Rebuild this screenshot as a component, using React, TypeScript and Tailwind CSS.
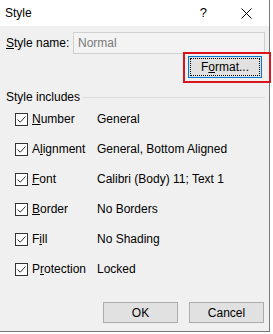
import { useState } from "react";

const rows = [
  { pre: "", key: "N", post: "umber", value: "General" },
  { pre: "A", key: "l", post: "ignment", value: "General, Bottom Aligned" },
  { pre: "", key: "F", post: "ont", value: "Calibri (Body) 11; Text 1" },
  { pre: "", key: "B", post: "order", value: "No Borders" },
  { pre: "F", key: "i", post: "ll", value: "No Shading" },
  { pre: "P", key: "r", post: "otection", value: "Locked" },
];

function Check({ on }: { on: boolean }) {
  return (
    <span className="w-[13px] h-[13px] border border-[#333] bg-white flex items-center justify-center shrink-0">
      {on && (
        <svg width="11" height="11" viewBox="0 0 11 11">
          <path d="M1.5 5.5 L4.2 8.2 L9.5 2.5" fill="none" stroke="#333" strokeWidth="1" />
        </svg>
      )}
    </span>
  );
}

export default function App() {
  const [checked, setChecked] = useState(rows.map(() => true));

  return (
    <div
      className="relative w-[273px] h-[334px] bg-white overflow-hidden text-[12px] text-[#000]"
      style={{ fontFamily: '"Liberation Sans", Arial, sans-serif' }}
    >
      <div className="w-[270px] h-[332px] bg-[#f0f0f0] border-r border-b border-[#777] flex flex-col">
        {/* title bar */}
        <div className="h-[26px] bg-white flex items-center pl-[5px] shrink-0">
          <span className="text-[12px]">Style</span>
          <span className="ml-auto mr-[34px] text-[13px]">?</span>
          <svg width="11" height="11" viewBox="0 0 11 11" className="mr-[17px]">
            <path d="M0.5 0.5 L10.5 10.5 M10.5 0.5 L0.5 10.5" stroke="#000" strokeWidth="1" />
          </svg>
        </div>

        {/* style name */}
        <div className="mt-[6px] h-[22px] flex items-center pl-[6px]">
          <span className="w-[67px]">
            <span className="underline">S</span>tyle name:
          </span>
          <div className="w-[192px] h-[22px] border border-[#d0d0d0] bg-[#f3f3f3] flex items-center pl-[4px] text-[#7a7a7a]">
            Normal
          </div>
        </div>

        {/* format button */}
        <div className="mt-[2px] h-[22px] flex justify-end pr-[7px]">
          <button
            type="button"
            className="w-[74px] h-[22px] border border-[#0078d7] bg-[#e1e1e1] p-[1px]"
          >
            <span className="w-full h-full border border-dotted border-[#000] flex items-center justify-center">
              F<span className="underline">o</span>rmat...
            </span>
          </button>
        </div>

        {/* style includes */}
        <div className="mt-[12px] h-[14px] flex items-center pl-[6px]">
          <span>Style includes</span>
          <span className="flex-1 h-px bg-[#dcdcdc] ml-[3px] mr-[4px]" />
        </div>

        <div className="flex flex-col">
          {rows.map((r, i) => (
            <div
              key={r.value}
              className="h-[30px] flex items-center pl-[15px] cursor-default"
              onClick={() => setChecked(checked.map((c, j) => (j === i ? !c : c)))}
            >
              <Check on={checked[i]} />
              <span className="w-[69px] pl-[4px]">
                {r.pre}
                <span className="underline">{r.key}</span>
                {r.post}
              </span>
              <span>{r.value}</span>
            </div>
          ))}
        </div>

        {/* buttons */}
        <div className="mt-auto mb-[8px] flex justify-end gap-[11px] pr-[5px]">
          <button type="button" className="w-[75px] h-[21px] border border-[#adadad] bg-[#e1e1e1]">
            OK
          </button>
          <button type="button" className="w-[75px] h-[21px] border border-[#adadad] bg-[#e1e1e1]">
            Cancel
          </button>
        </div>
      </div>

      {/* red highlight annotation */}
      <div className="absolute left-[183px] top-[52px] w-[88px] h-[31px] border-2 border-[#d9151b] pointer-events-none" />
    </div>
  );
}
